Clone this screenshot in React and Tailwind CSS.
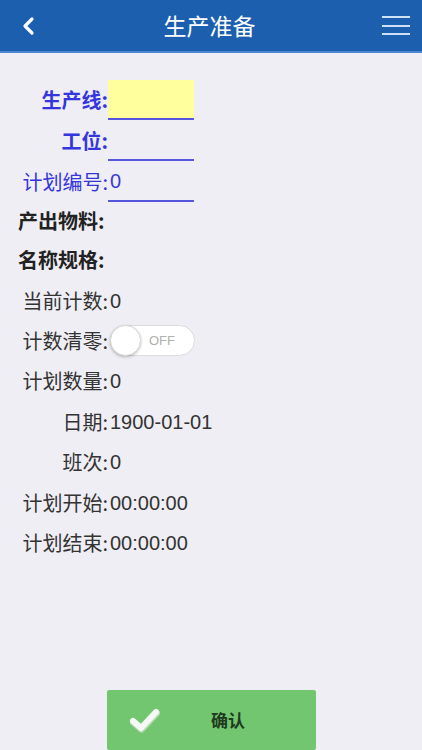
import React from "react";

const font = { fontFamily: '"Noto Sans CJK SC", "Liberation Sans", sans-serif' };

function Row({ label, labelClass = "text-[#333]", left = false, children, h = "h-[40.4px]" }) {
  return (
    <div className={`flex items-center ${h}`}>
      <div className={`w-[108px] ${left ? "text-left pl-[18px]" : "text-right"} text-[20px] leading-none whitespace-nowrap ${labelClass}`}>{label}</div>
      <div className="flex-1 flex items-center pl-[2px] text-[20px] leading-none text-[#333]" style={{ fontFamily: '"Liberation Sans", "Noto Sans CJK SC", sans-serif' }}>
        {children}
      </div>
    </div>
  );
}

function InputBox({ yellow, value }) {
  return (
    <div className={`-ml-[2px] w-[86px] h-[40px] border-b-2 border-[#5555dd] flex items-center text-[#3a3ad6] ${yellow ? "bg-[#ffff9e]" : ""}`}>
      <span className="pl-[2px]">{value}</span>
    </div>
  );
}

export default function App() {
  return (
    <div className="w-[422px] h-[750px] bg-[#efeef4] relative overflow-hidden flex flex-col" style={font}>
      <div className="h-[53px] bg-[#1c5fae] border-b-2 border-[#4e86d2] flex items-center justify-between px-[20px] shrink-0">
        <svg width="14" height="20" viewBox="0 0 14 20" className="ml-[1px]">
          <path d="M11 3 L4 10 L11 17" stroke="white" strokeWidth="3.2" fill="none" strokeLinecap="round" strokeLinejoin="round" />
        </svg>
        <div className="text-white text-[23px] leading-none pl-[2px]">生产准备</div>
        <div className="flex flex-col gap-[6.5px] w-[28px] -mr-[8px]">
          <div className="h-[2px] bg-[#cfe1f7]" />
          <div className="h-[2px] bg-[#cfe1f7]" />
          <div className="h-[2px] bg-[#cfe1f7]" />
        </div>
      </div>

      <div className="pt-[26px] flex flex-col">
        <Row label="生产线:" labelClass="text-[#3535dd] font-bold" h="h-[41px]">
          <InputBox yellow value="" />
        </Row>
        <Row label="工位:" labelClass="text-[#3535dd] font-bold" h="h-[41px]">
          <InputBox value="" />
        </Row>
        <Row label="计划编号:" labelClass="text-[#3535dd]" h="h-[41px]">
          <InputBox value="0" />
        </Row>
        <Row label="产出物料:" labelClass="text-[#222] font-bold" left h="h-[38px]"></Row>
        <Row label="名称规格:" labelClass="text-[#222] font-bold" left></Row>
        <Row label="当前计数:">0</Row>
        <Row label="计数清零:">
          <div className="w-[85px] h-[31px] rounded-full bg-white border border-[#dcdcdc] relative flex items-center">
            <div className="absolute -left-[1px] -top-[1px] w-[31px] h-[31px] rounded-full bg-white border border-[#d8d8d8] shadow-[0_1px_3px_rgba(0,0,0,0.25)]" />
            <span className="ml-[38px] text-[13px] text-[#b0b0b0]" style={{ fontFamily: '"Liberation Sans", sans-serif' }}>OFF</span>
          </div>
        </Row>
        <Row label="计划数量:">0</Row>
        <Row label="日期:">1900-01-01</Row>
        <Row label="班次:">0</Row>
        <Row label="计划开始:">00:00:00</Row>
        <Row label="计划结束:">00:00:00</Row>
      </div>

      <div className="absolute left-[107px] top-[690px] w-[209px] h-[60px] bg-[#72c66f] rounded-[2px] flex items-center">
        <svg width="36" height="30" viewBox="0 0 36 30" className="ml-[20px]">
          <path d="M6 16 L14 23 L29 7" stroke="#b9d9b8" strokeWidth="7" fill="none" strokeLinecap="round" strokeLinejoin="round" transform="translate(0.5,1)" />
          <path d="M6 16 L14 23 L29 7" stroke="#f4faf3" strokeWidth="6" fill="none" strokeLinecap="round" strokeLinejoin="round" />
        </svg>
        <span className="ml-[48px] text-[17px] font-bold text-[#1f3a1f]">确认</span>
      </div>
    </div>
  );
}
